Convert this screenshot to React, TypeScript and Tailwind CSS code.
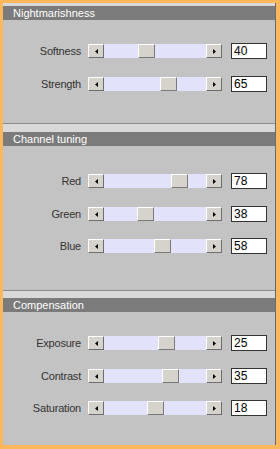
import React from "react";

type Row = { label: string; value: string; thumb: number; mt: string };
type Section = { title: string; band: string; pt: string; height: string; rows: Row[] };

const sections: Section[] = [
  {
    title: "Nightmarishness",
    band: "h-[3px]",
    pt: "pt-[23px]",
    height: "h-[121px]",
    rows: [
      { label: "Softness", value: "40", thumb: 34, mt: "mt-0" },
      { label: "Strength", value: "65", thumb: 56, mt: "mt-[17px]" },
    ],
  },
  {
    title: "Channel tuning",
    band: "h-[8px]",
    pt: "pt-[27px]",
    height: "h-[167px]",
    rows: [
      { label: "Red", value: "78", thumb: 67, mt: "mt-0" },
      { label: "Green", value: "38", thumb: 33, mt: "mt-[17px]" },
      { label: "Blue", value: "58", thumb: 50, mt: "mt-[16px]" },
    ],
  },
  {
    title: "Compensation",
    band: "h-[7px]",
    pt: "pt-[23px]",
    height: "h-[154px]",
    rows: [
      { label: "Exposure", value: "25", thumb: 54, mt: "mt-0" },
      { label: "Contrast", value: "35", thumb: 58, mt: "mt-[17px]" },
      { label: "Saturation", value: "18", thumb: 43, mt: "mt-[16px]" },
    ],
  },
];

const ArrowButton = ({ dir }: { dir: "left" | "right" }) => (
  <div className="flex h-[14px] w-[16px] shrink-0 items-center justify-center border-t border-l border-t-white border-l-white border-r border-b border-r-[#6e6e6e] border-b-[#6e6e6e] bg-[#d6d3cc]">
    <svg width="3" height="5" viewBox="0 0 3 5">
      {dir === "left" ? (
        <path d="M0 2.5 L3 0 L3 5 Z" fill="#000" />
      ) : (
        <path d="M3 2.5 L0 0 L0 5 Z" fill="#000" />
      )}
    </svg>
  </div>
);

const Slider = ({ thumb }: { thumb: number }) => (
  <div className="flex h-[14px] w-[134px] items-center">
    <ArrowButton dir="left" />
    <div className="relative h-[14px] flex-1 bg-[#e2e2fa]">
      <div
        className="absolute top-0 h-[14px] w-[17px] border-t border-l border-t-white border-l-white border-r border-b border-r-[#7a7a7a] border-b-[#7a7a7a] bg-[#d6d3cc]"
        style={{ left: thumb }}
      />
    </div>
    <ArrowButton dir="right" />
  </div>
);

const SliderRow = ({ row }: { row: Row }) => (
  <div className={`flex h-[16px] items-center ${row.mt}`}>
    <div className="w-[78px] text-right text-[11px] leading-none tracking-[-0.2px] text-[#333]">
      {row.label}
    </div>
    <div className="ml-[7px]">
      <Slider thumb={row.thumb} />
    </div>
    <div className="ml-[9px] flex h-[16px] w-[36px] items-center border border-[#333] bg-white pl-[2px] text-[12px] leading-none text-black">
      {row.value}
    </div>
  </div>
);

export default function App() {
  return (
    <div
      className="h-[449px] w-[280px] bg-[#fbb75c] pt-[3px] pr-[4px] pb-[4px] pl-[3px]"
      style={{ fontFamily: '"Liberation Sans", Arial, sans-serif' }}
    >
      <div className="flex h-[442px] flex-col border-r border-[#6a6a6a] bg-[#c3c3c3]">
        {sections.map((s, i) => (
          <div
            key={s.title}
            className={`flex flex-col ${s.height} ${i < 2 ? "border-b border-[#8a8a8a]" : ""}`}
          >
            <div className={`${s.band} bg-[#d9d9d9]`} />
            <div className="flex h-[14px] items-center bg-[#7b7b7b] pl-[10px] text-[11px] leading-none text-white">
              {s.title}
            </div>
            <div className={`flex flex-col ${s.pt}`}>
              {s.rows.map((r) => (
                <SliderRow key={r.label} row={r} />
              ))}
            </div>
          </div>
        ))}
      </div>
    </div>
  );
}
